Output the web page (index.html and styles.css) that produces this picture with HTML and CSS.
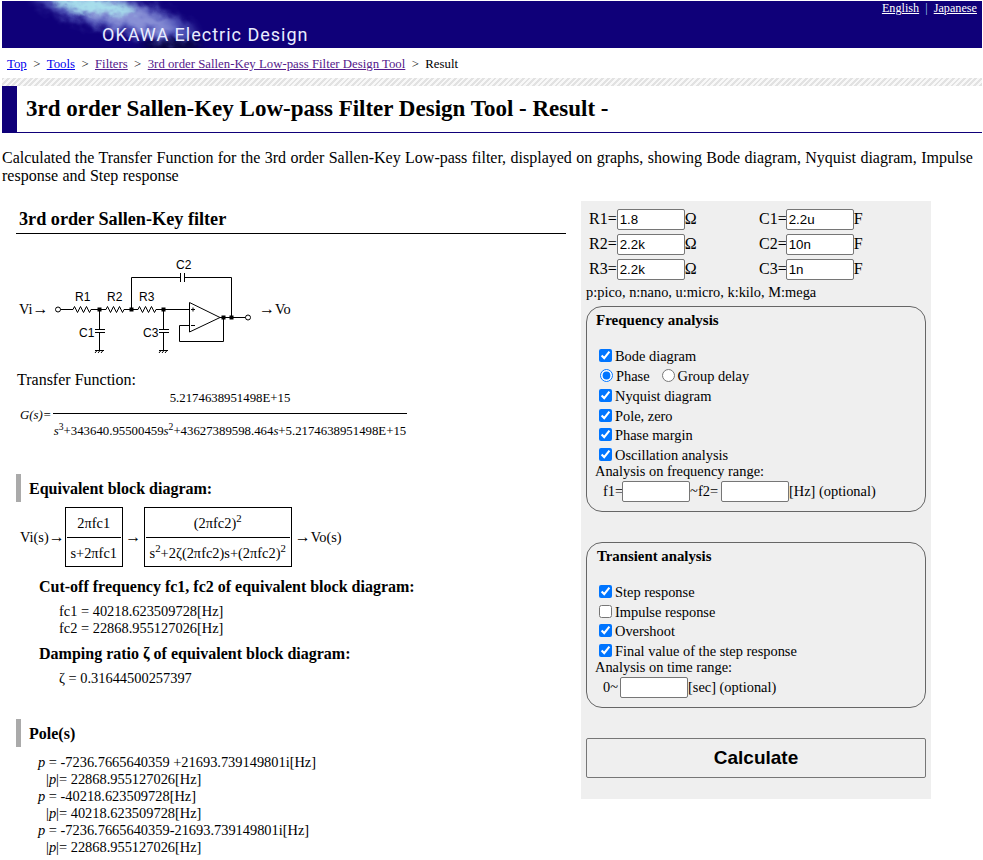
FILE: index.html
```html
<!DOCTYPE html>
<html lang="en">
<head>
<meta charset="utf-8">
<title>3rd order Sallen-Key Low-pass Filter Design Tool - Result</title>
<link rel="stylesheet" href="styles.css">
</head>
<body>
<header class="banner">
  <svg class="cloud" width="320" height="47" viewBox="0 0 320 47" aria-hidden="true">
    <defs>
      <filter id="b1" x="-30%" y="-80%" width="160%" height="260%">
        <feGaussianBlur stdDeviation="5" result="s"/>
        <feTurbulence type="fractalNoise" baseFrequency="0.09 0.14" numOctaves="2" seed="4" result="n"/>
        <feDisplacementMap in="s" in2="n" scale="16"/>
      </filter>
      <filter id="b2" x="-30%" y="-80%" width="160%" height="260%">
        <feGaussianBlur stdDeviation="3" result="s"/>
        <feTurbulence type="fractalNoise" baseFrequency="0.12 0.18" numOctaves="2" seed="9" result="n"/>
        <feDisplacementMap in="s" in2="n" scale="12"/>
      </filter>
      <filter id="b3" x="-30%" y="-80%" width="160%" height="260%"><feGaussianBlur stdDeviation="6"/></filter>
    </defs>
    <ellipse cx="170" cy="44" rx="30" ry="7" fill="#04002a" filter="url(#b3)"/>
    <ellipse cx="112" cy="13" rx="84" ry="16" transform="rotate(14 112 13)" fill="#5258bc" filter="url(#b1)"/>
    <ellipse cx="122" cy="15" rx="52" ry="10" transform="rotate(14 122 15)" fill="#8a92d6" filter="url(#b1)"/>
    <ellipse cx="92" cy="5" rx="42" ry="7" transform="rotate(6 92 5)" fill="#a8e0ec" filter="url(#b2)"/>
  </svg>
  <span class="brand">OKAWA Electric Design</span>
  <nav class="lang"><a href="#">English</a> <span class="sep">|</span> <a href="#">Japanese</a></nav>
</header>

<nav class="crumbs">
  <a href="#">Top</a><span class="gt">&gt;</span><a href="#">Tools</a><span class="gt">&gt;</span><a class="seen" href="#">Filters</a><span class="gt">&gt;</span><a class="seen" href="#">3rd order Sallen-Key Low-pass Filter Design Tool</a><span class="gt">&gt;</span>Result
</nav>
<div class="hatch"></div>

<h1 class="title">3rd order Sallen-Key Low-pass Filter Design Tool - Result -</h1>

<p class="intro">Calculated the Transfer Function for the 3rd order Sallen-Key Low-pass filter, displayed on graphs, showing Bode diagram, Nyquist diagram, Impulse response and Step response</p>

<main class="layout">
  <section class="left">
    <h2 class="circuit-title">3rd order Sallen-Key filter</h2>

    <svg class="schematic" width="300" height="104" viewBox="0 252 300 104" role="img" aria-label="Third order Sallen-Key filter circuit">
      <g fill="none" stroke="#000" stroke-width="1">
        <path d="M60 309.5H73l1.5-3 3 6 3-6 3 6 3-6 3 6 1.5-3H106l1.5-3 3 6 3-6 3 6 3-6 3 6 1.5-3H138l1.5-3 3 6 3-6 3 6 3-6 3 6 1.5-3H189.500"/>
        <path d="M131.500 309.500V277.500H180.500M184.500 277.500H231.500V317.500"/>
        <path d="M180.500 273V282M184.500 273V282"/>
        <path d="M189.500 302.500V332L220 317.500Z"/>
        <path d="M220 317.500H246"/>
        <path d="M189.500 325.500H179.500V341.500H223.500V317.500"/>
        <path d="M99.500 309.500V329.500M95 329.500H105M95 332.500H105M99.500 332.500V350"/>
        <path d="M163.500 309.500V329.500M159 329.500H169M159 332.500H169M163.500 332.500V350"/>
        <path d="M95 350.500H104M95 353 97 350.500M98 353 100 350.500M101 353 103 350.500"/>
        <path d="M159 350.500H168M159 353 161 350.500M162 353 164 350.500M165 353 167 350.500"/>
        <circle cx="58" cy="309.500" r="2.500" fill="#fff"/>
        <circle cx="248" cy="317.500" r="2.500" fill="#fff"/>
        <path d="M191 309.500H195M193 307.500V311.500M191 325.500H195"/>
      </g>
      <g fill="#000">
        <rect x="97.500" y="307.500" width="4" height="4"/>
        <rect x="129.500" y="307.500" width="4" height="4"/>
        <rect x="161.500" y="307.500" width="4" height="4"/>
        <rect x="221.500" y="315.500" width="4" height="4"/>
        <rect x="229.500" y="315.500" width="4" height="4"/>
      </g>
      <g class="parts">
        <text x="176" y="269">C2</text>
        <text x="75" y="301">R1</text>
        <text x="107" y="301">R2</text>
        <text x="139" y="301">R3</text>
        <text x="79" y="337">C1</text>
        <text x="143" y="337">C3</text>
      </g>
      <g class="io">
        <text x="19" y="314">Vi<tspan class="arr">→</tspan></text>
        <text x="259" y="314"><tspan class="arr">→</tspan>Vo</text>
      </g>
    </svg>

    <div class="tf-label">Transfer Function:</div>
    <div class="tf">
      <i class="gs">G(s)=</i>
      <div class="frac">
        <div class="num">5.2174638951498E+15</div>
        <div class="den"><i>s</i><sup>3</sup>+343640.95500459<i>s</i><sup>2</sup>+43627389598.464<i>s</i>+5.2174638951498E+15</div>
      </div>
    </div>

    <h3 class="bar-head eq-head">Equivalent block diagram:</h3>
    <div class="blocks">
      <span>Vi(s)<span class="arr">→</span></span>
      <div class="block b1">
        <div class="b-num">2πfc1</div>
        <div class="b-den">s+2πfc1</div>
      </div>
      <span class="between arr">→</span>
      <div class="block b2">
        <div class="b-num">(2πfc2)<sup>2</sup></div>
        <div class="b-den">s<sup>2</sup>+2ζ(2πfc2)s+(2πfc2)<sup>2</sup></div>
      </div>
      <span class="out"><span class="arr">→</span>Vo(s)</span>
    </div>

    <h4 class="sub-head cut-head">Cut-off frequency fc1, fc2 of equivalent block diagram:</h4>
    <div class="vals cut-vals">
      <div>fc1 = 40218.623509728[Hz]</div>
      <div>fc2 = 22868.955127026[Hz]</div>
    </div>
    <h4 class="sub-head damp-head">Damping ratio ζ of equivalent block diagram:</h4>
    <div class="vals damp-vals">ζ = 0.31644500257397</div>

    <h3 class="bar-head pole-head">Pole(s)</h3>
    <div class="poles">
      <div><i>p</i> = -7236.7665640359 +21693.739149801i[Hz]</div>
      <div class="abs">|<i>p</i>|= 22868.955127026[Hz]</div>
      <div><i>p</i> = -40218.623509728[Hz]</div>
      <div class="abs">|<i>p</i>|= 40218.623509728[Hz]</div>
      <div><i>p</i> = -7236.7665640359-21693.739149801i[Hz]</div>
      <div class="abs">|<i>p</i>|= 22868.955127026[Hz]</div>
    </div>
  </section>

  <form class="panel">
    <div class="params">
      <label class="param">R1=<input type="text" value="1.8">Ω</label>
      <label class="param">C1=<input type="text" value="2.2u">F</label>
      <label class="param">R2=<input type="text" value="2.2k">Ω</label>
      <label class="param">C2=<input type="text" value="10n">F</label>
      <label class="param">R3=<input type="text" value="2.2k">Ω</label>
      <label class="param">C3=<input type="text" value="1n">F</label>
    </div>
    <div class="units">p:pico, n:nano, u:micro, k:kilo, M:mega</div>

    <fieldset class="group freq">
      <div class="group-title">Frequency analysis</div>
      <label class="opt"><input type="checkbox" checked>Bode diagram</label>
      <div class="opt radios">
        <label><input type="radio" name="m" checked>Phase</label>
        <label><input type="radio" name="m">Group delay</label>
      </div>
      <label class="opt"><input type="checkbox" checked>Nyquist diagram</label>
      <label class="opt"><input type="checkbox" checked>Pole, zero</label>
      <label class="opt"><input type="checkbox" checked>Phase margin</label>
      <label class="opt"><input type="checkbox" checked>Oscillation analysis</label>
      <div class="range-label">Analysis on frequency range:</div>
      <div class="range">f1=<input type="text">~f2=<input type="text">[Hz] (optional)</div>
    </fieldset>

    <fieldset class="group trans">
      <div class="group-title">Transient analysis</div>
      <label class="opt"><input type="checkbox" checked>Step response</label>
      <label class="opt"><input type="checkbox">Impulse response</label>
      <label class="opt"><input type="checkbox" checked>Overshoot</label>
      <label class="opt"><input type="checkbox" checked>Final value of the step response</label>
      <div class="range-label">Analysis on time range:</div>
      <div class="range">0~<input type="text">[sec] (optional)</div>
    </fieldset>

    <button class="calc" type="button">Calculate</button>
  </form>
</main>
</body>
</html>
```

FILE: styles.css
```css
html { background: #fff; overflow: hidden; }
body {
  margin: 0;
  padding: 1px 1px 0 2px;
  font-family: "Liberation Serif", "Times New Roman", serif;
  font-size: 14.400px;
  color: #000;
}

/* banner */
.banner {
  position: relative;
  height: 47px;
  background: #0f0079;
  overflow: hidden;
}
.cloud { position: absolute; left: 0; top: 0; }
.brand {
  position: absolute;
  left: 100px;
  top: 23px;
  font-family: Roboto, "Liberation Sans", sans-serif;
  font-size: 18px;
  line-height: 22px;
  letter-spacing: 1px;
  color: #e8ecff;
}
.lang {
  position: absolute;
  right: 5px;
  top: 0;
  font-size: 12.200px;
  line-height: 15px;
  color: #fff;
}
.lang a { color: #fff; }
.sep { margin: 0 3px; color: #9fd0f0; }

/* crumbs */
.crumbs {
  height: 30px;
  padding-left: 5px;
  font-size: 12.800px;
  line-height: 31px;
  padding-top: 1px;
  box-sizing: border-box;
}
.crumbs a { color: #0000ee; }
.crumbs a.seen { color: #551a8b; }
.gt { margin: 0 6.400px; }
.hatch {
  height: 8px;
  background: repeating-linear-gradient(135deg, #e2e2e2 0 2px, #f8f8f8 2px 4px);
}

.title {
  margin: 0;
  height: 46px;
  border-left: 15px solid #0f0079;
  border-bottom: 1px solid #0f0079;
  padding-left: 9px;
  font-size: 23px;
  line-height: 46px;
  font-weight: bold;
}
.intro {
  margin: 16px 0 0;
  font-size: 16px;
  line-height: 18px;
  word-spacing: 0.400px;
}

.layout {
  display: flex;
  margin-top: 16px;
}
.left {
  width: 550px;
  margin-left: 14px;
}
.circuit-title {
  margin: 0;
  padding: 9px 0 4px 3px;
  border-bottom: 1px solid #000;
  font-size: 18.200px;
  line-height: 19px;
  font-weight: bold;
}
.schematic { display: block; margin: 18px 0 0 -16px; }
.parts text { font: 12px "Liberation Sans", Arial, sans-serif; }
.io text { font: 14.400px "Liberation Serif", serif; }
.arr { font-size: 16px; line-height: 0; }

.tf-label { margin: 15px 0 0 1px; line-height: 17px; font-size: 16px; }
.tf { display: flex; align-items: center; margin: 1px 0 0 4px; }
.gs { font-size: 12.800px; width: 33px; }
.frac { text-align: center; font-size: 12.800px; width: 354px; }
.num { line-height: 18px; border-bottom: 1px solid #000; padding-bottom: 6px; }
.den { line-height: 22px; padding-top: 6px; white-space: nowrap; }
sup { font-size: 75%; line-height: 0; }

.bar-head {
  margin: 0;
  border-left: 5px solid #aaa;
  padding-left: 8px;
  height: 28px;
  line-height: 30px;
  font-size: 16px;
  font-weight: bold;
}
.eq-head { margin-top: 32px; }
.blocks {
  display: flex;
  align-items: center;
  margin: 5px 0 0 4px;
}
.block { border: 1px solid #000; text-align: center; height: 58px; padding: 0 1px; }
.b1 { width: 54px; }
.b2 { width: 144px; }
.between { width: 21px; text-align: center; }
.out { margin-left: 3px; }
.b-num { height: 29px; line-height: 30px; border-bottom: 1px solid #000; }
.b-den { line-height: 30px; white-space: nowrap; }
.sub-head { margin: 0 0 0 23px; font-size: 16px; line-height: 18px; font-weight: bold; }
.cut-head { margin-top: 11px; }
.vals { margin-left: 43px; line-height: 17px; }
.cut-vals { margin-top: 7px; }
.damp-head { margin-top: 8px; }
.damp-vals { margin-top: 7px; }
.pole-head { margin-top: 32px; }
.poles { margin: 7px 0 0 22px; line-height: 17px; }
.abs { padding-left: 8px; }

/* panel */
.panel {
  box-sizing: border-box;
  width: 350px;
  height: 598px;
  margin-left: 15px;
  padding: 7px 5px 5px;
  background: #efefef;
  flex: none;
}
.params {
  display: grid;
  grid-template-columns: 170px 1fr;
  padding-left: 3px;
  row-gap: 3px;
}
.param { display: flex; align-items: center; height: 22px; font-size: 16px; }
.param:nth-child(even) input { margin-left: -1px; }
input[type="text"] {
  box-sizing: border-box;
  width: 68px;
  height: 21px;
  margin: 0;
  padding: 1px 2px;
  border: 1px solid #767676;
  border-radius: 2px;
  background: #fff;
  font: 13.333px "Liberation Sans", Arial, sans-serif;
}
.units { margin-top: 4px; line-height: 17px; }
.group {
  margin: 5px 0 0;
  min-width: 0;
  padding: 0 9px;
  border: 1px solid #666;
  border-radius: 16px;
}
.freq { height: 206px; box-sizing: border-box; }
.trans { height: 166px; box-sizing: border-box; margin-top: 30px; }
.group-title { font-weight: bold; font-size: 15px; line-height: 17px; margin: 5px 0 18px; }
.trans .group-title { font-size: 14.800px; padding-left: 1px; }
.opt { display: flex; align-items: center; height: 19.750px; line-height: 17px; padding-left: 3px; }
.trans .opt { height: 19.600px; }
.opt input { margin: 0 3px 2px 0; }
.radios label { display: flex; align-items: center; margin-right: 11px; }
.radios input { margin: 0 3px 2px 1px; }
.range-label { line-height: 15px; margin: -2px 0 0 -1px; }
.trans .range-label { margin-top: -1.400px; }
.range { display: flex; align-items: center; margin-top: 2px; padding-left: 7px; height: 21px; }
.freq .range input { margin-left: -1px; }
.freq .range input + input { margin-left: 3px; }
.trans .range input { margin-left: 2px; }
.calc {
  display: block;
  box-sizing: border-box;
  width: 100%;
  height: 40px;
  margin-top: 30px;
  background: #efefef;
  border: 1px solid #767676;
  border-radius: 2px;
  font: bold 19px "Liberation Sans", Arial, sans-serif;
  color: #000;
}
```
